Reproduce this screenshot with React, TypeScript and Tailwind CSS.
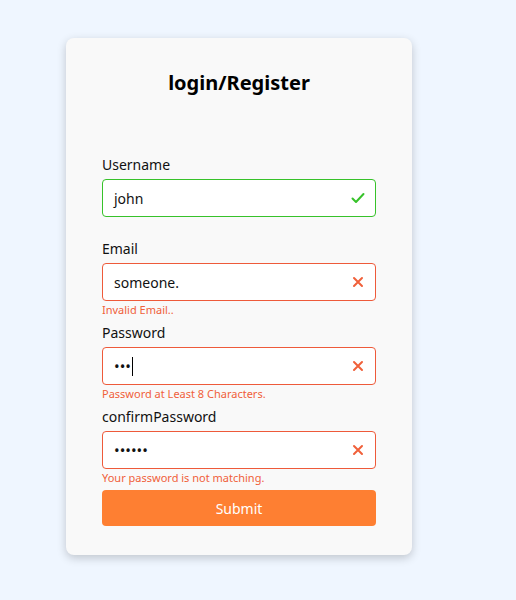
import React from "react";

const font = { fontFamily: '"Noto Sans", "Open Sans", sans-serif' };

function Check() {
  return (
    <svg width="14" height="12" viewBox="0 0 14 12" className="absolute right-[10px] top-1/2 -translate-y-1/2">
      <polyline points="1.5,6.5 5,10 12.5,2" fill="none" stroke="#37c22a" strokeWidth="2" strokeLinecap="round" strokeLinejoin="round" />
    </svg>
  );
}

function Cross() {
  return (
    <svg width="12" height="12" viewBox="0 0 12 12" className="absolute right-[11px] top-1/2 -translate-y-1/2">
      <path d="M2 2 L10 10 M10 2 L2 10" fill="none" stroke="#f0603a" strokeWidth="2" strokeLinecap="round" />
    </svg>
  );
}

function Field({
  label,
  value,
  ok,
  error,
  cursor,
  dots,
}: {
  label: string;
  value: string;
  ok?: boolean;
  error?: string;
  cursor?: boolean;
  dots?: boolean;
}) {
  return (
    <div className="flex flex-col">
      <div className="h-[20px] text-[14px] leading-[20px] text-[#111]">{label}</div>
      <div
        className={`relative mt-[4px] flex h-[38px] items-center rounded-[4px] border bg-white pl-[11px] ${
          ok ? "border-[#37c22a]" : "border-[#ee5a3a]"
        }`}
      >
        <span className={`text-[#111] ${dots ? "text-[15px] tracking-[0px]" : "text-[14px]"}`}>{value}</span>
        {cursor && <span className="ml-[1px] inline-block h-[19px] w-[1px] bg-black" />}
        {ok ? <Check /> : <Cross />}
      </div>
      <div className="h-[22px] pt-[1px] text-[11px] leading-[16px] text-[#f0603a]">{error ?? ""}</div>
    </div>
  );
}

export default function App() {
  return (
    <div className="min-h-[600px] w-full bg-[#eff6ff] pt-[38px]" style={font}>
      <div className="ml-[66px] w-[346px] rounded-[8px] bg-[#f9f9f9] px-[36px] pb-[29px] pt-[31px] shadow-[0_3px_10px_rgba(0,0,0,0.2)]">
        <h2 className="h-[28px] text-center text-[20px] font-bold leading-[28px] text-black">login/Register</h2>
        <div className="mt-[58px] flex flex-col">
          <Field label="Username" value="john" ok />
          <Field label="Email" value="someone." error="Invalid Email.." />
          <Field label="Password" value="•••" dots cursor error="Password at Least 8 Characters." />
          <Field label="confirmPassword" value="••••••" dots error="Your password is not matching." />
        </div>
        <button className="-mt-px h-[36px] w-full rounded-[4px] bg-[#fe7f32] text-[14px] text-white">Submit</button>
      </div>
    </div>
  );
}
